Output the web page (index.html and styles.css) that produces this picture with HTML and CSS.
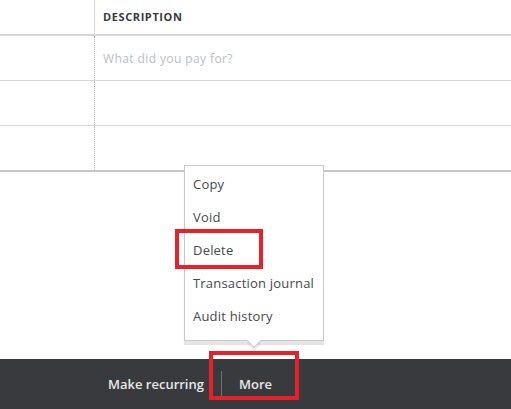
FILE: index.html
```html
<!DOCTYPE html>
<html lang="en">

<head>
    <meta charset="UTF-8">
    <title>Expense - More menu</title>
    <link rel="stylesheet" href="styles.css">
</head>

<body>
    <!-- Line items table -->
    <div class="lines">
        <div class="line head">
            <div class="cell num"></div>
            <div class="cell desc">DESCRIPTION</div>
        </div>
        <div class="line">
            <div class="cell num"></div>
            <div class="cell desc placeholder">What did you pay for?</div>
        </div>
        <div class="line">
            <div class="cell num"></div>
            <div class="cell desc"></div>
        </div>
        <div class="line last">
            <div class="cell num"></div>
            <div class="cell desc"></div>
        </div>
    </div>

    <!-- More menu popover -->
    <div class="more-menu">
        <ul>
            <li>Copy</li>
            <li>Void</li>
            <li>Delete</li>
            <li>Transaction journal</li>
            <li>Audit history</li>
        </ul>
        <div class="arrow"></div>
    </div>

    <!-- Annotation boxes -->
    <div class="mark mark-delete"></div>
    <div class="mark mark-more"></div>

    <div class="footer">
        <span class="action">Make recurring</span>
        <span class="divider"></span>
        <span class="action">More</span>
    </div>
</body>

</html>
```

FILE: styles.css
```css
* {
    box-sizing: border-box;
}

body {
    margin: 0;
    height: 409px;
    display: flex;
    flex-direction: column;
    background-color: white;
    font-family: "Open Sans", "Noto Sans", sans-serif;
    color: #393a3d;
    overflow: hidden;
}

.lines {
    width: 100%;
}

.line {
    display: flex;
    height: 45px;
    border-bottom: 1px solid #d4d7dc;
}

.line.head {
    height: 36px;
    border-bottom: 2px solid #d4d7dc;
}

.line.last {
    height: 46px;
    border-bottom: 2px solid #c4c6ca;
}

.cell.num {
    width: 95px;
    border-right: 1px dotted #b9bcc2;
}

.line.head .cell.num {
    border-right: 1px solid #d4d7dc;
}

.cell.desc {
    flex: 1;
    display: flex;
    align-items: center;
    padding-left: 8px;
}

.line.head .cell.desc {
    font-size: 11px;
    font-weight: bold;
    letter-spacing: 0.6px;
    padding-bottom: 1px;
}

.placeholder {
    font-size: 12px;
    letter-spacing: 0.4px;
    color: #babec5;
}

.more-menu {
    position: absolute;
    left: 184px;
    top: 165px;
    width: 140px;
    background-color: white;
    border: 1px solid #c6c9cf;
    box-shadow: 0 4px 1px rgba(0, 0, 0, 0.1);
}

.more-menu ul {
    list-style: none;
    margin: 0;
    padding: 2px 0 7px;
}

.more-menu li {
    line-height: 33px;
    padding-left: 8px;
    font-size: 13px;
    letter-spacing: 0.2px;
    color: #47484c;
}

.more-menu .arrow {
    position: absolute;
    left: 64px;
    bottom: -6px;
    width: 10px;
    height: 10px;
    background-color: white;
    border-right: 1px solid #c6c9cf;
    border-bottom: 1px solid #c6c9cf;
    transform: rotate(45deg);
    box-shadow: 2px 2px 1px rgba(0, 0, 0, 0.08);
}

.mark {
    position: absolute;
    border: 4px solid #e8202a;
}

.mark-delete {
    left: 175px;
    top: 229px;
    width: 88px;
    height: 40px;
}

.mark-more {
    left: 209px;
    top: 351px;
    width: 90px;
    height: 49px;
}

.footer {
    margin-top: auto;
    height: 50px;
    background-color: #393a3d;
    display: flex;
    align-items: center;
    padding-left: 108px;
}

.footer .action {
    color: #e8e8e8;
    font-size: 13px;
    font-weight: 600;
}

.footer .divider {
    width: 1px;
    height: 27px;
    margin: 0 17px 0 17px;
    background-color: #6e6f73;
}
```
